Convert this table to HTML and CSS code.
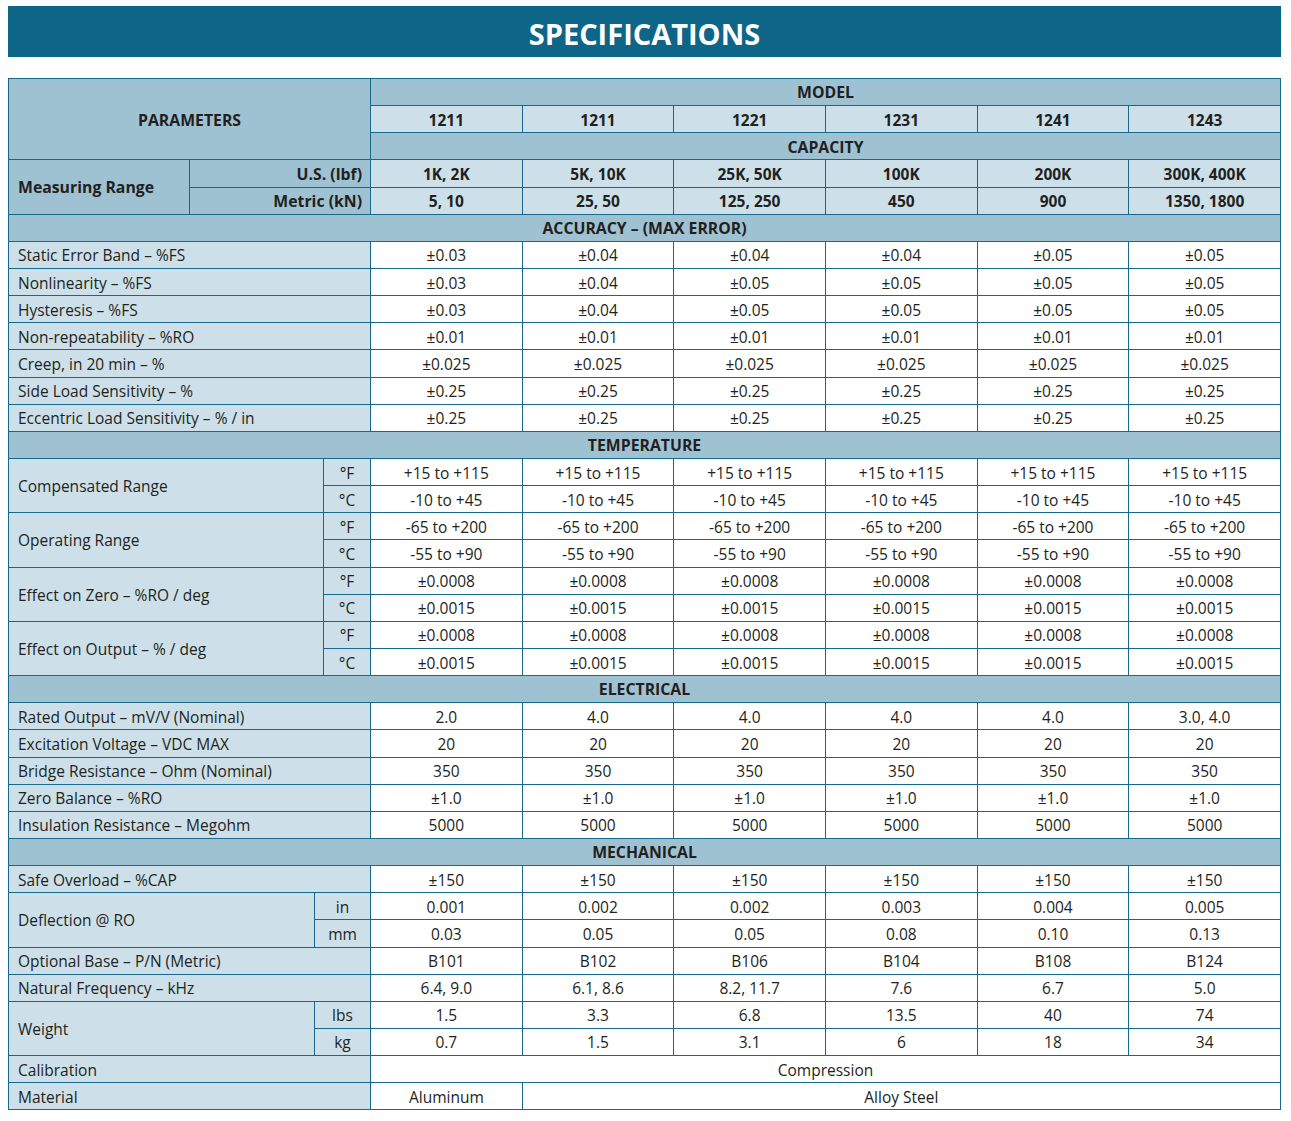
FILE: index.html
```html
<!DOCTYPE html>
<html>
<head>
<meta charset="utf-8">
<link rel="stylesheet" href="styles.css">
</head>
<body>
<div class="title">SPECIFICATIONS</div>
<table class="spec">
<colgroup>
<col class="ca"><col class="cb"><col class="cc"><col class="cd">
<col class="v"><col class="v"><col class="v"><col class="v"><col class="v"><col class="v">
</colgroup>
<tbody>
<tr><td class="dk b" colspan="4" rowspan="3">PARAMETERS</td><td class="dk b" colspan="6">MODEL</td></tr>
<tr class="lt b"><td>1211</td><td>1211</td><td>1221</td><td>1231</td><td>1241</td><td>1243</td></tr>
<tr><td class="dk b" colspan="6">CAPACITY</td></tr>
<tr class="lt b"><td class="dk b l" rowspan="2">Measuring Range</td><td class="dk b r" colspan="3">U.S. (lbf)</td><td>1K, 2K</td><td>5K, 10K</td><td>25K, 50K</td><td>100K</td><td>200K</td><td>300K, 400K</td></tr>
<tr class="lt b"><td class="dk b r" colspan="3">Metric (kN)</td><td>5, 10</td><td>25, 50</td><td>125, 250</td><td>450</td><td>900</td><td>1350, 1800</td></tr>
<tr><td class="dk b" colspan="10">ACCURACY – (MAX ERROR)</td></tr>
<tr><td class="lt l" colspan="4">Static Error Band – %FS</td><td>±0.03</td><td>±0.04</td><td>±0.04</td><td>±0.04</td><td>±0.05</td><td>±0.05</td></tr>
<tr><td class="lt l" colspan="4">Nonlinearity – %FS</td><td>±0.03</td><td>±0.04</td><td>±0.05</td><td>±0.05</td><td>±0.05</td><td>±0.05</td></tr>
<tr><td class="lt l" colspan="4">Hysteresis – %FS</td><td>±0.03</td><td>±0.04</td><td>±0.05</td><td>±0.05</td><td>±0.05</td><td>±0.05</td></tr>
<tr><td class="lt l" colspan="4">Non-repeatability – %RO</td><td>±0.01</td><td>±0.01</td><td>±0.01</td><td>±0.01</td><td>±0.01</td><td>±0.01</td></tr>
<tr><td class="lt l" colspan="4">Creep, in 20 min – %</td><td>±0.025</td><td>±0.025</td><td>±0.025</td><td>±0.025</td><td>±0.025</td><td>±0.025</td></tr>
<tr><td class="lt l" colspan="4">Side Load Sensitivity – %</td><td>±0.25</td><td>±0.25</td><td>±0.25</td><td>±0.25</td><td>±0.25</td><td>±0.25</td></tr>
<tr><td class="lt l" colspan="4">Eccentric Load Sensitivity – % / in</td><td>±0.25</td><td>±0.25</td><td>±0.25</td><td>±0.25</td><td>±0.25</td><td>±0.25</td></tr>
<tr><td class="dk b" colspan="10">TEMPERATURE</td></tr>
<tr><td class="lt l" colspan="3" rowspan="2">Compensated Range</td><td class="lt">°F</td><td>+15 to +115</td><td>+15 to +115</td><td>+15 to +115</td><td>+15 to +115</td><td>+15 to +115</td><td>+15 to +115</td></tr>
<tr><td class="lt">°C</td><td>-10 to +45</td><td>-10 to +45</td><td>-10 to +45</td><td>-10 to +45</td><td>-10 to +45</td><td>-10 to +45</td></tr>
<tr><td class="lt l" colspan="3" rowspan="2">Operating Range</td><td class="lt">°F</td><td>-65 to +200</td><td>-65 to +200</td><td>-65 to +200</td><td>-65 to +200</td><td>-65 to +200</td><td>-65 to +200</td></tr>
<tr><td class="lt">°C</td><td>-55 to +90</td><td>-55 to +90</td><td>-55 to +90</td><td>-55 to +90</td><td>-55 to +90</td><td>-55 to +90</td></tr>
<tr><td class="lt l" colspan="3" rowspan="2">Effect on Zero – %RO / deg</td><td class="lt">°F</td><td>±0.0008</td><td>±0.0008</td><td>±0.0008</td><td>±0.0008</td><td>±0.0008</td><td>±0.0008</td></tr>
<tr><td class="lt">°C</td><td>±0.0015</td><td>±0.0015</td><td>±0.0015</td><td>±0.0015</td><td>±0.0015</td><td>±0.0015</td></tr>
<tr><td class="lt l" colspan="3" rowspan="2">Effect on Output – % / deg</td><td class="lt">°F</td><td>±0.0008</td><td>±0.0008</td><td>±0.0008</td><td>±0.0008</td><td>±0.0008</td><td>±0.0008</td></tr>
<tr><td class="lt">°C</td><td>±0.0015</td><td>±0.0015</td><td>±0.0015</td><td>±0.0015</td><td>±0.0015</td><td>±0.0015</td></tr>
<tr><td class="dk b" colspan="10">ELECTRICAL</td></tr>
<tr><td class="lt l" colspan="4">Rated Output – mV/V (Nominal)</td><td>2.0</td><td>4.0</td><td>4.0</td><td>4.0</td><td>4.0</td><td>3.0, 4.0</td></tr>
<tr><td class="lt l" colspan="4">Excitation Voltage – VDC MAX</td><td>20</td><td>20</td><td>20</td><td>20</td><td>20</td><td>20</td></tr>
<tr><td class="lt l" colspan="4">Bridge Resistance – Ohm (Nominal)</td><td>350</td><td>350</td><td>350</td><td>350</td><td>350</td><td>350</td></tr>
<tr><td class="lt l" colspan="4">Zero Balance – %RO</td><td>±1.0</td><td>±1.0</td><td>±1.0</td><td>±1.0</td><td>±1.0</td><td>±1.0</td></tr>
<tr><td class="lt l" colspan="4">Insulation Resistance – Megohm</td><td>5000</td><td>5000</td><td>5000</td><td>5000</td><td>5000</td><td>5000</td></tr>
<tr><td class="dk b" colspan="10">MECHANICAL</td></tr>
<tr><td class="lt l" colspan="4">Safe Overload – %CAP</td><td>±150</td><td>±150</td><td>±150</td><td>±150</td><td>±150</td><td>±150</td></tr>
<tr><td class="lt l" colspan="2" rowspan="2">Deflection @ RO</td><td class="lt" colspan="2">in</td><td>0.001</td><td>0.002</td><td>0.002</td><td>0.003</td><td>0.004</td><td>0.005</td></tr>
<tr><td class="lt" colspan="2">mm</td><td>0.03</td><td>0.05</td><td>0.05</td><td>0.08</td><td>0.10</td><td>0.13</td></tr>
<tr><td class="lt l" colspan="4">Optional Base – P/N (Metric)</td><td>B101</td><td>B102</td><td>B106</td><td>B104</td><td>B108</td><td>B124</td></tr>
<tr><td class="lt l" colspan="4">Natural Frequency – kHz</td><td>6.4, 9.0</td><td>6.1, 8.6</td><td>8.2, 11.7</td><td>7.6</td><td>6.7</td><td>5.0</td></tr>
<tr><td class="lt l" colspan="2" rowspan="2">Weight</td><td class="lt" colspan="2">lbs</td><td>1.5</td><td>3.3</td><td>6.8</td><td>13.5</td><td>40</td><td>74</td></tr>
<tr><td class="lt" colspan="2">kg</td><td>0.7</td><td>1.5</td><td>3.1</td><td>6</td><td>18</td><td>34</td></tr>
<tr><td class="lt l" colspan="4">Calibration</td><td colspan="6">Compression</td></tr>
<tr><td class="lt l" colspan="4">Material</td><td>Aluminum</td><td colspan="5">Alloy Steel</td></tr>
</tbody>
</table>
</body>
</html>
```
FILE: styles.css
```css
body {
  margin: 0;
  padding: 6px 0 0 8px;
  font-family: "Open Sans", Lato, "Liberation Sans", sans-serif;
  color: #231f20;
  background: #fff;
}
.title {
  width: 1273px;
  height: 51px;
  box-sizing: border-box;
  padding-top: 4px;
  background: #0d6587;
  color: #fff;
  font-weight: 700;
  font-size: 29px;
  display: flex;
  align-items: center;
  justify-content: center;
}
.spec {
  margin-top: 21px;
  border-collapse: collapse;
  table-layout: fixed;
  width: 1272px;
}
.ca { width: 181px; }
.cb { width: 125px; }
.cc { width: 9px; }
.cd { width: 47px; }
.v { width: 151.67px; }
.spec td {
  border: 1px solid #17698b;
  height: 24.15px;
  padding: 2px 8px 0;
  font-size: 15.5px;
  text-align: center;
  vertical-align: middle;
  white-space: nowrap;
  background: #fff;
  line-height: 1.1;
}
.spec td.dk { background: #9fc2d3; }
.spec .lt td, .spec td.lt { background: #cde0e9; }
.spec .lt td.dk { background: #9fc2d3; }
.b { font-weight: 700; font-size: 15.8px; }
.spec td.b { font-size: 15.8px; }
.spec td.l { text-align: left; padding-left: 9px; }
.spec td.r { text-align: right; padding-right: 8px; }
```
